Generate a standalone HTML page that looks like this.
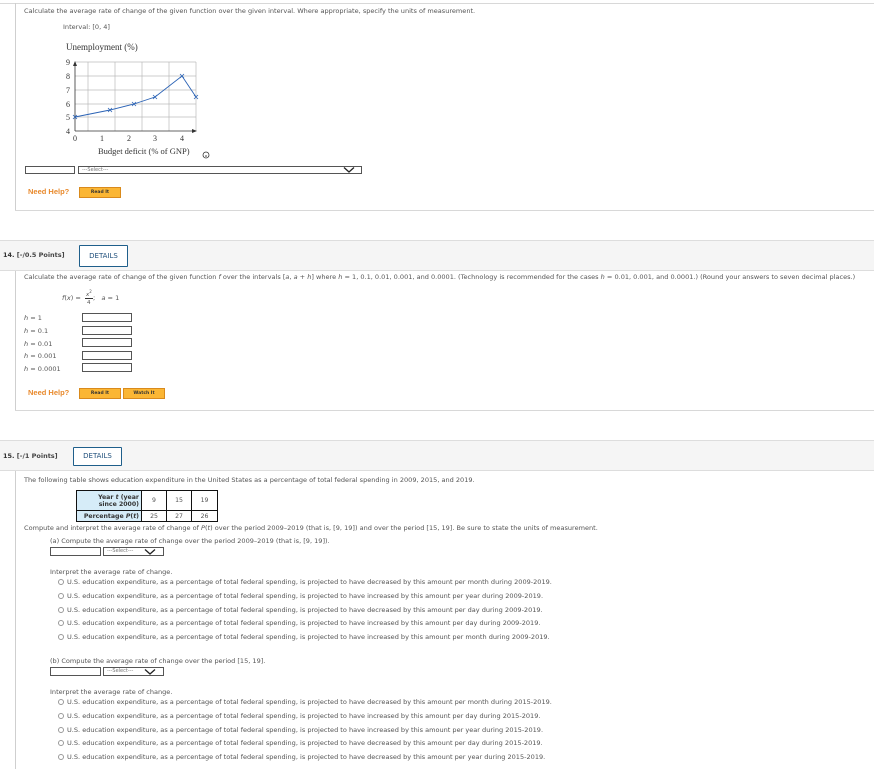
<!DOCTYPE html>
<html><head><meta charset="utf-8"><style>
*{margin:0;padding:0;box-sizing:border-box}
body{width:874px;height:769px;background:#fff;position:relative;overflow:hidden;font-family:"DejaVu Sans","Liberation Sans",sans-serif;font-size:6.55px;color:#555}
.a{position:absolute;white-space:nowrap;line-height:8px}
.hl{position:absolute;left:0;width:874px;height:1px;background:#d8d8d8}
.vl{position:absolute;left:15px;width:1px;background:#cfcfcf}
.band{position:absolute;left:0;width:874px;background:#f5f5f5;border-top:1px solid #ddd;border-bottom:1px solid #ddd}
.inp{position:absolute;border:1px solid #555;background:#fff}
.sel{position:absolute;border:1px solid #555;background:#fff;font-size:5px;color:#777;padding-left:3px;line-height:7px}
.btn{position:absolute;background:#fbb634;border:1px solid #d98a1c;font-size:4.5px;color:#333;text-align:center;font-weight:bold;line-height:9px}
.nh{position:absolute;color:#e8892c;font-family:"Liberation Sans",sans-serif;font-weight:bold;font-size:7.5px}
.det{position:absolute;border:1px solid #1f5f8b;background:#fff;color:#1f4f7b;font-size:7px;text-align:center;border-radius:1px}
.pts{position:absolute;font-weight:bold;color:#333;font-size:6.5px}
.r{position:absolute;width:6px;height:6px;border:1px solid #999;border-radius:50%}
i{font-style:italic}
</style></head><body>
<div class="hl" style="top:3px"></div>
<div class="vl" style="top:3px;height:208px"></div>
<div class="hl" style="top:210px;left:15px"></div>
<div class="a" style="left:24px;top:7px">Calculate the average rate of change of the given function over the given interval. Where appropriate, specify the units of measurement.</div>
<div class="a" style="left:63px;top:23px">Interval: [0, 4]</div>
<svg style="position:absolute;left:0;top:0" width="230" height="165">
<text x="66" y="50" font-family="Liberation Serif" font-size="9" fill="#333">Unemployment (%)</text>
<g stroke="#bbb" stroke-width="0.7">
<line x1="88" y1="62" x2="88" y2="131"/><line x1="115" y1="62" x2="115" y2="131"/><line x1="142" y1="62" x2="142" y2="131"/><line x1="169" y1="62" x2="169" y2="131"/><line x1="196" y1="62" x2="196" y2="131"/>
<line x1="75" y1="62" x2="196" y2="62"/><line x1="75" y1="76" x2="196" y2="76"/><line x1="75" y1="90" x2="196" y2="90"/><line x1="75" y1="104" x2="196" y2="104"/><line x1="75" y1="117" x2="196" y2="117"/>
</g>
<line x1="75" y1="131" x2="194" y2="131" stroke="#333" stroke-width="0.8"/>
<line x1="75" y1="131" x2="75" y2="64" stroke="#333" stroke-width="0.8"/>
<path d="M73 66L75 61L77 66Z M192 129L197 131L192 133Z" fill="#333"/>
<polyline points="75,117 110,110 134,104 155,97 182,76 196,97" fill="none" stroke="#2a62b5" stroke-width="0.9"/>
<g stroke="#2a62b5" stroke-width="0.8">
<path d="M73 115l4 4M77 115l-4 4M108 108l4 4M112 108l-4 4M132 102l4 4M136 102l-4 4M153 95l4 4M157 95l-4 4M180 74l4 4M184 74l-4 4M194 95l4 4M198 95l-4 4"/>
</g>
<g font-family="Liberation Serif" font-size="8" fill="#333">
<text x="66" y="65">9</text><text x="66" y="79">8</text><text x="66" y="93">7</text><text x="66" y="107">6</text><text x="66" y="120">5</text><text x="66" y="134">4</text>
<text x="73" y="141">0</text><text x="100" y="141">1</text><text x="127" y="141">2</text><text x="153" y="141">3</text><text x="180" y="141">4</text>
<text x="98" y="154" font-size="8.5">Budget deficit (% of GNP)</text>
</g>
<circle cx="206" cy="155" r="3" fill="none" stroke="#333" stroke-width="0.8"/><circle cx="206" cy="156" r="0.8" fill="#333"/>
</svg>
<div class="inp" style="left:25px;top:166px;width:50px;height:8px"></div>
<div class="sel" style="left:78px;top:166px;width:284px;height:8px">---Select---</div>
<svg style="position:absolute;left:342px;top:166px" width="14" height="8"><path d="M2 1.5L7 6L12 1.5" fill="none" stroke="#222" stroke-width="1.3"/></svg>
<div class="nh" style="left:28px;top:187px">Need Help?</div>
<div class="btn" style="left:79px;top:187px;width:42px;height:11px">Read It</div>

<div class="band" style="top:240px;height:31px"></div>
<div class="pts" style="left:3px;top:251px">14. <span style="color:#444">[-/0.5 Points]</span></div>
<div class="det" style="left:79px;top:245px;width:49px;height:22px;line-height:20px">DETAILS</div>
<div class="vl" style="top:271px;height:140px"></div>
<div class="hl" style="top:410px;left:15px"></div>
<div class="a" style="left:24px;top:273px">Calculate the average rate of change of the given function <i>f</i> over the intervals [<i>a</i>, <i>a</i> + <i>h</i>] where <i>h</i> = 1, 0.1, 0.01, 0.001, and 0.0001. (Technology is recommended for the cases <i>h</i> = 0.01, 0.001, and 0.0001.) (Round your answers to seven decimal places.)</div>
<div class="a" style="left:62px;top:294px"><i>f</i>(<i>x</i>) = </div>
<div class="a" style="left:86px;top:288px;font-size:5.5px"><i>x</i><sup style="font-size:4px">2</sup></div>
<div style="position:absolute;left:85px;top:298px;width:8px;height:1px;background:#333"></div>
<div class="a" style="left:87px;top:299px;font-size:5.5px">4</div>
<div class="a" style="left:93px;top:294px">; &nbsp;&nbsp;<i>a</i> = 1</div>
<div class="a" style="left:24px;top:314px"><i>h</i> = 1</div>
<div class="a" style="left:24px;top:327px"><i>h</i> = 0.1</div>
<div class="a" style="left:24px;top:340px"><i>h</i> = 0.01</div>
<div class="a" style="left:24px;top:352px"><i>h</i> = 0.001</div>
<div class="a" style="left:24px;top:365px"><i>h</i> = 0.0001</div>
<div class="inp" style="left:82px;top:313px;width:50px;height:9px"></div>
<div class="inp" style="left:82px;top:326px;width:50px;height:9px"></div>
<div class="inp" style="left:82px;top:338px;width:50px;height:9px"></div>
<div class="inp" style="left:82px;top:351px;width:50px;height:9px"></div>
<div class="inp" style="left:82px;top:363px;width:50px;height:9px"></div>
<div class="nh" style="left:28px;top:388px">Need Help?</div>
<div class="btn" style="left:79px;top:388px;width:42px;height:11px">Read It</div>
<div class="btn" style="left:123px;top:388px;width:42px;height:11px">Watch It</div>

<div class="band" style="top:440px;height:31px"></div>
<div class="pts" style="left:3px;top:452px">15. <span style="color:#444">[-/1 Points]</span></div>
<div class="det" style="left:73px;top:447px;width:49px;height:19px;line-height:17px">DETAILS</div>
<div class="vl" style="top:471px;height:298px"></div>
<div class="a" style="left:24px;top:476px">The following table shows education expenditure in the United States as a percentage of total federal spending in 2009, 2015, and 2019.</div>
<table style="position:absolute;left:76px;top:490px;border-collapse:collapse;font-size:6.2px;color:#555">
<tr style="height:20px"><td style="border:1px solid #111;background:#d6ecf8;width:65px;text-align:right;font-weight:bold;color:#333;line-height:7px;padding-right:2px">Year <i>t</i> (year<br>since 2000)</td><td style="border:1px solid #111;width:25px;text-align:center">9</td><td style="border:1px solid #111;width:25px;text-align:center">15</td><td style="border:1px solid #111;width:26px;text-align:center">19</td></tr>
<tr style="height:11px"><td style="border:1px solid #111;background:#d6ecf8;text-align:right;font-weight:bold;color:#333;padding-right:2px">Percentage <i>P</i>(<i>t</i>)</td><td style="border:1px solid #111;text-align:center">25</td><td style="border:1px solid #111;text-align:center">27</td><td style="border:1px solid #111;text-align:center">26</td></tr>
</table>
<div class="a" style="left:24px;top:524px">Compute and interpret the average rate of change of <i>P</i>(<i>t</i>) over the period 2009–2019 (that is, [9, 19]) and over the period [15, 19]. Be sure to state the units of measurement.</div>
<div class="a" style="left:50px;top:537px">(a) Compute the average rate of change over the period 2009–2019 (that is, [9, 19]).</div>
<div class="inp" style="left:50px;top:547px;width:51px;height:9px"></div>
<div class="sel" style="left:103px;top:547px;width:61px;height:9px">---Select---</div>
<svg style="position:absolute;left:143px;top:548px" width="14" height="8"><path d="M2 1.5L7 6L12 1.5" fill="none" stroke="#222" stroke-width="1.3"/></svg>
<div class="a" style="left:50px;top:568px">Interpret the average rate of change.</div>
<div class="r" style="left:58px;top:579px"></div><div class="a" style="left:67px;top:578px">U.S. education expenditure, as a percentage of total federal spending, is projected to have decreased by this amount per month during 2009-2019.</div>
<div class="r" style="left:58px;top:593px"></div><div class="a" style="left:67px;top:592px">U.S. education expenditure, as a percentage of total federal spending, is projected to have increased by this amount per year during 2009-2019.</div>
<div class="r" style="left:58px;top:607px"></div><div class="a" style="left:67px;top:606px">U.S. education expenditure, as a percentage of total federal spending, is projected to have decreased by this amount per day during 2009-2019.</div>
<div class="r" style="left:58px;top:620px"></div><div class="a" style="left:67px;top:619px">U.S. education expenditure, as a percentage of total federal spending, is projected to have increased by this amount per day during 2009-2019.</div>
<div class="r" style="left:58px;top:634px"></div><div class="a" style="left:67px;top:633px">U.S. education expenditure, as a percentage of total federal spending, is projected to have increased by this amount per month during 2009-2019.</div>
<div class="a" style="left:50px;top:657px">(b) Compute the average rate of change over the period [15, 19].</div>
<div class="inp" style="left:50px;top:667px;width:51px;height:9px"></div>
<div class="sel" style="left:103px;top:667px;width:61px;height:9px">---Select---</div>
<svg style="position:absolute;left:143px;top:668px" width="14" height="8"><path d="M2 1.5L7 6L12 1.5" fill="none" stroke="#222" stroke-width="1.3"/></svg>
<div class="a" style="left:50px;top:688px">Interpret the average rate of change.</div>
<div class="r" style="left:58px;top:699px"></div><div class="a" style="left:67px;top:698px">U.S. education expenditure, as a percentage of total federal spending, is projected to have decreased by this amount per month during 2015-2019.</div>
<div class="r" style="left:58px;top:713px"></div><div class="a" style="left:67px;top:712px">U.S. education expenditure, as a percentage of total federal spending, is projected to have increased by this amount per day during 2015-2019.</div>
<div class="r" style="left:58px;top:727px"></div><div class="a" style="left:67px;top:726px">U.S. education expenditure, as a percentage of total federal spending, is projected to have increased by this amount per year during 2015-2019.</div>
<div class="r" style="left:58px;top:740px"></div><div class="a" style="left:67px;top:739px">U.S. education expenditure, as a percentage of total federal spending, is projected to have decreased by this amount per day during 2015-2019.</div>
<div class="r" style="left:58px;top:754px"></div><div class="a" style="left:67px;top:753px">U.S. education expenditure, as a percentage of total federal spending, is projected to have decreased by this amount per year during 2015-2019.</div>
</body></html>
